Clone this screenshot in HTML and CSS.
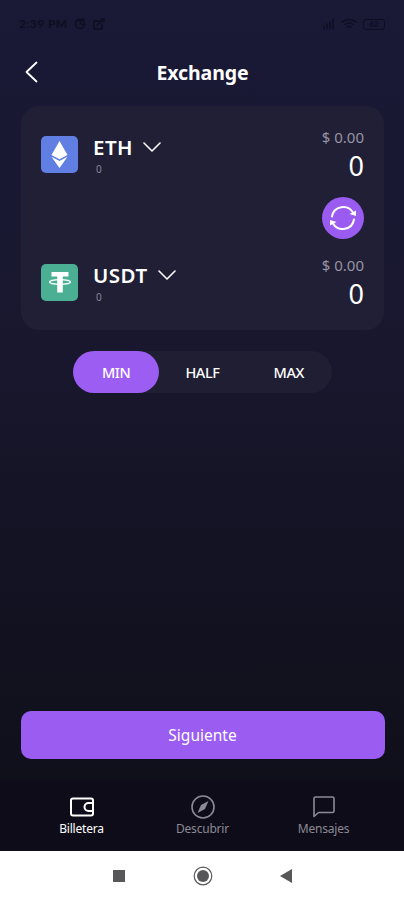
FILE: index.html
```html
<!DOCTYPE html>
<html lang="es">
<head>
<meta charset="utf-8">
<title>Exchange</title>
<link rel="stylesheet" href="styles.css">
</head>
<body>
<div class="status">
  <span class="time">2:39 PM</span>
  <svg width="15" height="14" viewBox="0 0 15 14"><circle cx="7" cy="7" r="4.5"/><path d="M3 4l3-2 2 5 4 1M7 4l4-2"/></svg>
  <svg width="14" height="14" viewBox="0 0 14 14"><path d="M8 4H2v8h8V7M5 8l7-6M9 2h3v3"/></svg>
  <span class="spacer"></span>
  <svg width="13" height="12" viewBox="0 0 13 12"><path d="M2 8v3M5 6v5M8 4v7M11 1v10"/></svg>
  <svg class="wifi" width="16" height="12" viewBox="0 0 16 12"><path d="M1 4q7-5 14 0M3.500 6.500q4.500-3 9 0M6 9q2-1.500 4 0"/></svg>
  <span class="battery">62</span>
</div>
<header class="header">
  <svg class="back" width="14" height="24" viewBox="0 0 14 24"><path d="M11.500 2.500L1.500 12l10 9.500"/></svg>
  <h1 class="title">Exchange</h1>
</header>
<main class="main">
  <section class="card">
    <div class="row">
      <svg class="coin eth" viewBox="0 0 37 37"><path d="M18.500 5L10.500 19l8 4.300 8-4.300z"/><path d="M10.500 20.700l8 4.300 8-4.300-8 11.300z"/></svg>
      <div class="asset">
        <div class="name"><span class="eth-name">ETH</span><svg class="chevron" width="18" height="11" viewBox="0 0 18 11"><path d="M1 1l8 8 8-8"/></svg></div>
        <div class="balance">0</div>
      </div>
      <div class="amounts"><div class="fiat">$ 0.00</div><div class="amount">0</div></div>
    </div>
    <div class="swap">
      <svg width="42" height="42" viewBox="0 0 42 42"><path d="M10 19.500A11.400 11.400 0 0 1 31 15.500M32 22.500A11.400 11.400 0 0 1 11 26.500"/><path class="tip" d="M34 13.500V19l-6.500-2zM8 28.500V23l6.500 2z"/></svg>
    </div>
    <div class="row">
      <svg class="coin usdt" viewBox="0 0 37 37"><path d="M10.500 8h17v4.500H21.800v16h-5.600V12.500H10.500z"/><ellipse cx="19" cy="18" rx="10.500" ry="2.400"/></svg>
      <div class="asset">
        <div class="name"><span class="usdt-name">USDT</span><svg class="chevron" width="18" height="11" viewBox="0 0 18 11"><path d="M1 1l8 8 8-8"/></svg></div>
        <div class="balance">0</div>
      </div>
      <div class="amounts"><div class="fiat">$ 0.00</div><div class="amount">0</div></div>
    </div>
  </section>
  <div class="segments"><span class="segment active">MIN</span><span class="segment">HALF</span><span class="segment">MAX</span></div>
  <button class="next">Siguiente</button>
</main>
<nav class="tabs">
  <div class="tab selected"><svg width="26" height="24" viewBox="0 0 26 24"><path d="M4 3.500h18q2 0 2 2v13q0 2-2 2H4q-2 0-2-2v-13q0-2 2-2zM24 8h-4.500a4 4 0 0 0 0 8H24"/></svg><span>Billetera</span></div>
  <div class="tab"><svg width="26" height="24" viewBox="0 0 26 24"><circle cx="13" cy="12" r="11"/><path class="needle" d="M18.500 6l-3.500 8-7.500 4 3.500-8z"/></svg><span>Descubrir</span></div>
  <div class="tab"><svg width="26" height="24" viewBox="0 0 26 24"><path d="M4.500 2h17q1.500 0 1.500 1.500V16q0 1.500-1.500 1.500H7.500L3 21.500v-18Q3 2 4.500 2z"/></svg><span>Mensajes</span></div>
</nav>
<footer class="system">
  <svg width="12" height="12" viewBox="0 0 12 12"><path d="M0 0h12v12H0z"/></svg>
  <svg width="20" height="20" viewBox="0 0 20 20"><circle class="ring" cx="10" cy="10" r="8.800"/><circle cx="10" cy="10" r="6"/></svg>
  <svg width="12" height="14" viewBox="0 0 12 14"><path d="M12 0v14L0 7z"/></svg>
</footer>
</body>
</html>
```
FILE: styles.css
```css
* { box-sizing: border-box; }
body {
  margin: 0;
  width: 404px;
  height: 900px;
  display: flex;
  flex-direction: column;
  overflow: hidden;
  background: linear-gradient(#1a1936 0, #191830 300px, #12111f 650px, #10101b 780px);
  color: #fff;
  font-family: "Noto Sans", "Open Sans", sans-serif;
}
svg { display: block; flex: none; fill: none; stroke: currentColor; stroke-width: 1.6; stroke-linecap: round; stroke-linejoin: round; }
.status { height: 48px; padding: 0 19px 0 19px; display: flex; align-items: center; gap: 4px; color: #0e0e20; }
.status svg { stroke-width: 1.4; }
.time { font: 700 12px/1 "Lato", sans-serif; width: 50px; white-space: nowrap; letter-spacing: .4px; }
.spacer { flex: 1; }
.wifi { margin: 0 2px; }
.battery { width: 22px; height: 11px; border: 1.5px solid; border-radius: 3px; font: 700 8px/8px "Lato", sans-serif; text-align: center; }
.header { height: 58px; padding: 0 24px 0 25px; display: grid; grid-template-columns: 14px 1fr 14px; align-items: start; }
.back { margin-top: 12px; stroke-width: 1.8; }
.title { margin: 11px 0 0; font-size: 19.500px; line-height: 28px; font-weight: 700; text-align: center; letter-spacing: -.1px; }
.main { height: 674px; padding: 0 19px 0 21px; display: flex; flex-direction: column; }
.card { height: 224px; margin-right: 1px; border-radius: 18px; background: #211f36; padding: 23px 20px 0; display: flex; flex-direction: column; }
.row { display: flex; height: 68px; }
.coin { width: 37px; height: 37px; margin-top: 7px; border-radius: 5px; stroke: none; fill: #fff; }
.eth { background: #617fe3; }
.usdt { background: #4aaf93; }
.usdt ellipse { fill: none; stroke: #fff; stroke-width: 1.3; }
.asset { margin-left: 15px; flex: 1; }
.name { display: flex; align-items: center; height: 28px; margin-top: 4px; font-size: 20.500px; font-weight: 600; gap: 11px; }
.eth-name { width: 39px; letter-spacing: .5px; }
.usdt-name { width: 54px; letter-spacing: .5px; }
.balance { font-size: 10px; line-height: 14px; padding-left: 3px; color: #88869a; margin-top: 1px; }
.amounts { text-align: right; }
.fiat { font-size: 15px; line-height: 18px; margin-top: -1px; color: #9693a4; letter-spacing: 0; }
.amount { font-size: 27px; line-height: 36px; margin-top: 2px; }
.swap { align-self: flex-end; width: 42px; height: 42px; border-radius: 50%; background: #9a5bf0; margin-bottom: 18px; }
.swap svg { stroke-width: 2; }
.swap .tip { fill: #fff; stroke: none; }
.segments { width: 259px; height: 42px; margin: 21px 0 0 52px; display: grid; grid-template-columns: repeat(3, 1fr); border-radius: 21px; background: #201e33; }
.segment { height: 42px; font-size: 14.500px; font-weight: 500; line-height: 43px; text-align: center; border-radius: 21px; letter-spacing: -.4px; }
.active { background: #9c5df3; }
.next { margin-top: 318px; height: 48px; border: 0; border-radius: 10px; background: #9b5cf2; color: #fff; font: 400 15.500px/46px "Noto Sans", sans-serif; padding: 0 1px 1px 0; }
.tabs { height: 71px; padding: 0 20px 0 21px; display: grid; grid-template-columns: repeat(3, 1fr); background: #0e0c18; }
.tab { display: flex; flex-direction: column; align-items: center; padding-top: 15px; color: #8b8a96; font-size: 12px; line-height: 16px; letter-spacing: -.2px; }
.tab svg { margin-bottom: 2px; }
.tab .needle { fill: currentColor; stroke: none; }
.tab.selected { color: #fff; }
.tab.selected svg { stroke-width: 2; }
.system { height: 49px; background: #fff; color: #58585a; display: flex; align-items: center; padding: 0 112px 0 113px; justify-content: space-between; }
.system svg { fill: currentColor; stroke: none; }
.system .ring { fill: none; stroke: currentColor; stroke-width: 1.2; }
```
